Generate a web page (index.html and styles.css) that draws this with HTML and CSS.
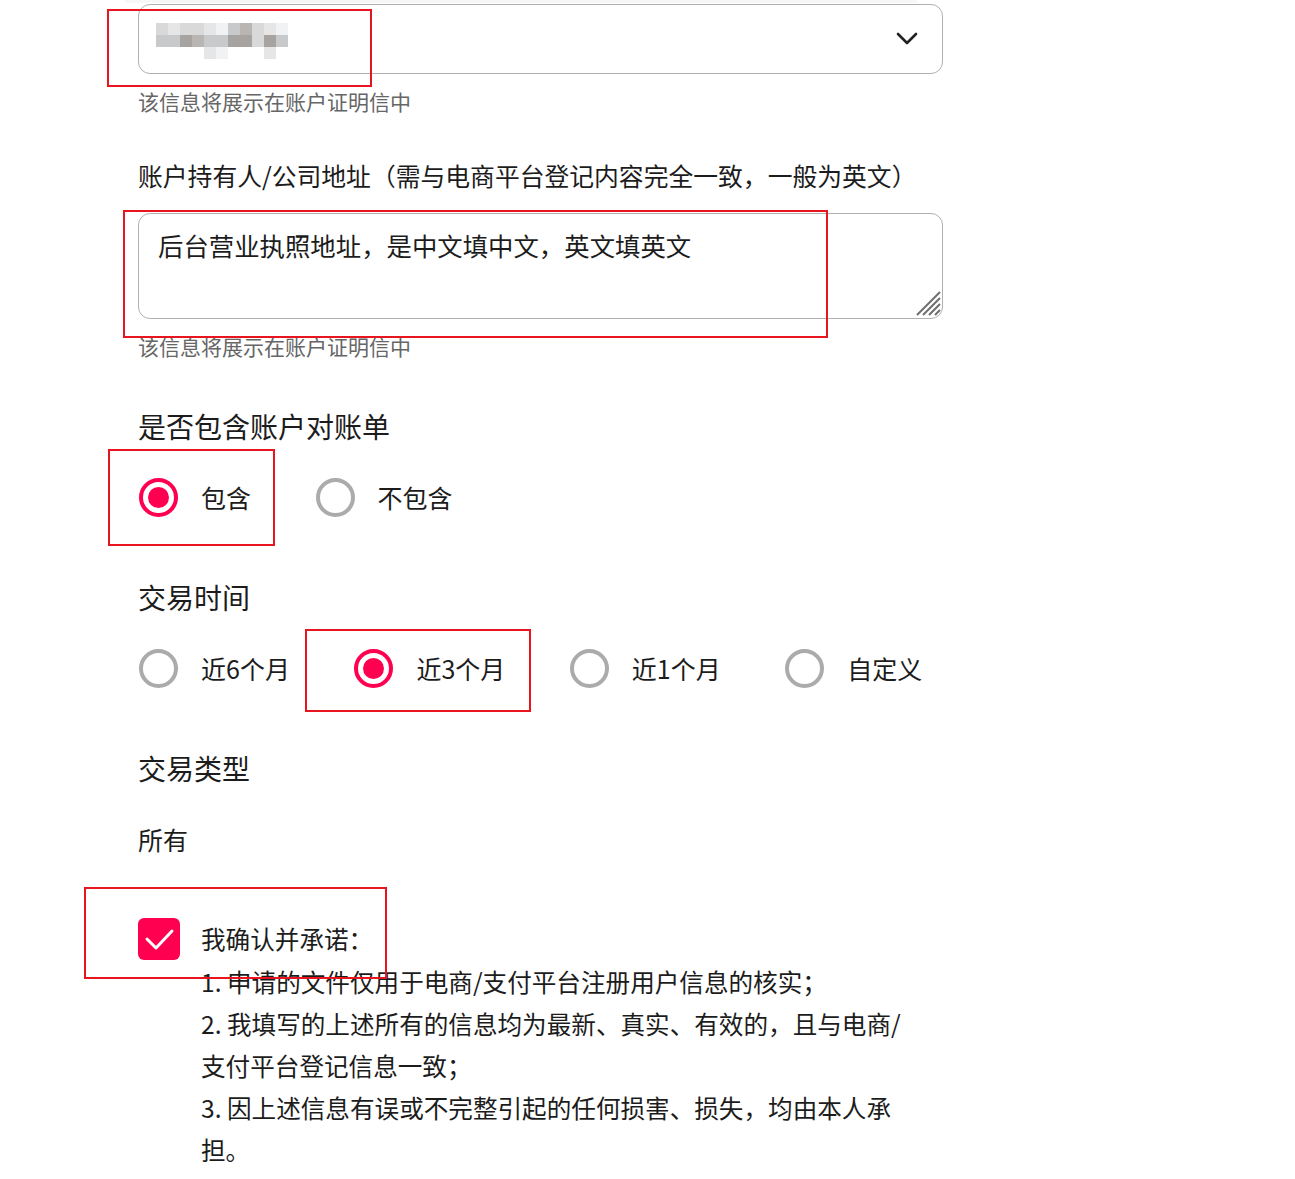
FILE: index.html
```html
<!DOCTYPE html>
<html lang="zh-CN">
<head>
<meta charset="utf-8">
<title>账户证明</title>
<link rel="stylesheet" href="styles.css">
</head>
<body>
<div class="top-shade"></div>
<form class="form">
  <div class="select">
    <div class="mosaic">
      <span class="t2"></span><span class="t1"></span><span class="t2"></span><span class="t2"></span><span class="t1"></span><span class="t0"></span><span class="t3"></span><span class="t4"></span><span class="t2"></span><span class="t1"></span><span class="t0"></span>
      <span class="t3"></span><span class="t3"></span><span class="t5"></span><span class="t4"></span><span class="t3"></span><span class="t3"></span><span class="t5"></span><span class="t5"></span><span class="t2"></span><span class="t5"></span><span class="t3"></span>
      <span class="tx"></span><span class="tx"></span><span class="tx"></span><span class="tx"></span><span class="t1"></span><span class="t0"></span><span class="tx"></span><span class="tx"></span><span class="tx"></span><span class="t1"></span><span class="tx"></span>
    </div>
    <svg class="chevron" viewBox="0 0 22 14" width="22" height="14"><path d="M2 2l9 9 9-9" fill="none" stroke="#222" stroke-width="2.6" stroke-linecap="round" stroke-linejoin="round"/></svg>
  </div>
  <p class="hint">该信息将展示在账户证明信中</p>

  <label class="field-label">账户持有人/公司地址（需与电商平台登记内容完全一致，一般为英文）</label>
  <div class="textarea">
    后台营业执照地址，是中文填中文，英文填英文
    <svg class="grip" viewBox="0 0 26 26" width="26" height="26"><path d="M2 25L25 2M8 25L25 8M14 25L25 14M20 25L25 20" stroke="#6f6f6f" stroke-width="2" fill="none"/></svg>
  </div>
  <p class="hint">该信息将展示在账户证明信中</p>

  <h3 class="section-label first">是否包含账户对账单</h3>
  <div class="radio-row">
    <span class="radio-item"><span class="radio checked"></span><span class="radio-text">包含</span></span>
    <span class="radio-item"><span class="radio"></span><span class="radio-text">不包含</span></span>
  </div>

  <h3 class="section-label">交易时间</h3>
  <div class="radio-row">
    <span class="radio-item"><span class="radio"></span><span class="radio-text">近6个月</span></span>
    <span class="radio-item"><span class="radio checked"></span><span class="radio-text">近3个月</span></span>
    <span class="radio-item"><span class="radio"></span><span class="radio-text">近1个月</span></span>
    <span class="radio-item"><span class="radio"></span><span class="radio-text">自定义</span></span>
  </div>

  <h3 class="section-label">交易类型</h3>
  <p class="value">所有</p>

  <div class="agree">
    <span class="checkbox"><svg viewBox="0 0 42 42" width="42" height="42"><path d="M9 21l9 9 16-17" fill="none" stroke="#fff" stroke-width="3" stroke-linecap="round" stroke-linejoin="round"/></svg></span>
    <div class="agree-text">
      <div class="agree-title">我确认并承诺：</div>
      <div>1. 申请的文件仅用于电商/支付平台注册用户信息的核实；</div>
      <div>2. 我填写的上述所有的信息均为最新、真实、有效的，且与电商/支付平台登记信息一致；</div>
      <div>3. 因上述信息有误或不完整引起的任何损害、损失，均由本人承担。</div>
    </div>
  </div>
</form>

<div class="mark mark-1"></div>
<div class="mark mark-2"></div>
<div class="mark mark-3"></div>
<div class="mark mark-4"></div>
<div class="mark mark-5"></div>
</body>
</html>
```

FILE: styles.css
```css
* { box-sizing: border-box; }
html, body { margin: 0; padding: 0; background: #fff; }
body {
  position: relative;
  font-family: "Noto Sans CJK SC", "Noto Sans", sans-serif;
  color: #1c1c1c;
  min-height: 1179px;
}
.top-shade {
  height: 3px;
  margin-left: 125px;
  width: 792px;
  background: #f7f7f7;
}
.form {
  margin: 1px 0 0 138px;
  width: 805px;
}
.select {
  height: 70px;
  border: 1px solid #b0b0b0;
  border-radius: 12px;
  display: flex;
  align-items: center;
  justify-content: space-between;
  padding: 4px 24px 0 17px;
}
.mosaic {
  display: grid;
  grid-template-columns: repeat(11, 12px);
  grid-auto-rows: 12px;
}
.mosaic span { display: block; }
.t0 { background: #f1f2f3; }
.t1 { background: #e6e6e6; }
.t2 { background: #d9d9d9; }
.t3 { background: #c8c9ca; }
.t4 { background: #b9b5b2; }
.t5 { background: #a6a3a1; }
.tx { background: transparent; }
.chevron { display: block; margin-top: -5px; }
.hint {
  margin: 12px 0 0;
  font-size: 21px;
  line-height: 30px;
  color: #666;
}
.field-label {
  display: block;
  margin-top: 42px;
  font-size: 24.8px;
  line-height: 34px;
}
.textarea {
  position: relative;
  margin-top: 21px;
  height: 106px;
  border: 1px solid #b0b0b0;
  border-radius: 12px;
  padding: 13px 19px 0;
  font-size: 25.4px;
  line-height: 36px;
}
.grip { position: absolute; right: 1px; bottom: 2px; }
.section-label {
  margin: 60px 0 0;
  font-size: 28px;
  line-height: 40px;
  font-weight: 400;
}
.section-label.first { margin-top: 45px; }
.radio-row {
  margin-top: 31px;
  display: flex;
  gap: 64.5px;
  padding-left: 1px;
}
.radio-item {
  display: flex;
  align-items: center;
  gap: 23px;
  height: 40px;
}
.radio {
  position: relative;
  width: 39px;
  height: 39px;
  border: 4px solid #ababab;
  border-radius: 50%;
  flex: none;
}
.radio.checked { border-color: #ff0050; }
.radio.checked::after {
  content: "";
  position: absolute;
  left: 5px;
  top: 5px;
  width: 21px;
  height: 21px;
  border-radius: 50%;
  background: #ff0050;
}
.radio-text { font-size: 25px; line-height: 34px; }
.value {
  margin: 34px 0 0;
  font-size: 25px;
  line-height: 34px;
}
.agree {
  margin-top: 61px;
  display: flex;
  align-items: flex-start;
  gap: 21px;
}
.checkbox {
  flex: none;
  width: 42px;
  height: 42px;
  margin-top: 1px;
  border-radius: 6px;
  background: #ff0050;
}
.checkbox svg { display: block; }
.agree-text {
  width: 708px;
  font-size: 24.6px;
  line-height: 42px;
}
.agree-title { margin-bottom: 1px; }
.mark {
  position: absolute;
  border: 2px solid #e8141e;
  pointer-events: none;
}
.mark-1 { left: 107px; top: 9px; width: 265px; height: 78px; }
.mark-2 { left: 123px; top: 210px; width: 705px; height: 128px; }
.mark-3 { left: 108px; top: 449px; width: 167px; height: 97px; }
.mark-4 { left: 305px; top: 629px; width: 226px; height: 83px; }
.mark-5 { left: 84px; top: 887px; width: 303px; height: 92px; }
```
